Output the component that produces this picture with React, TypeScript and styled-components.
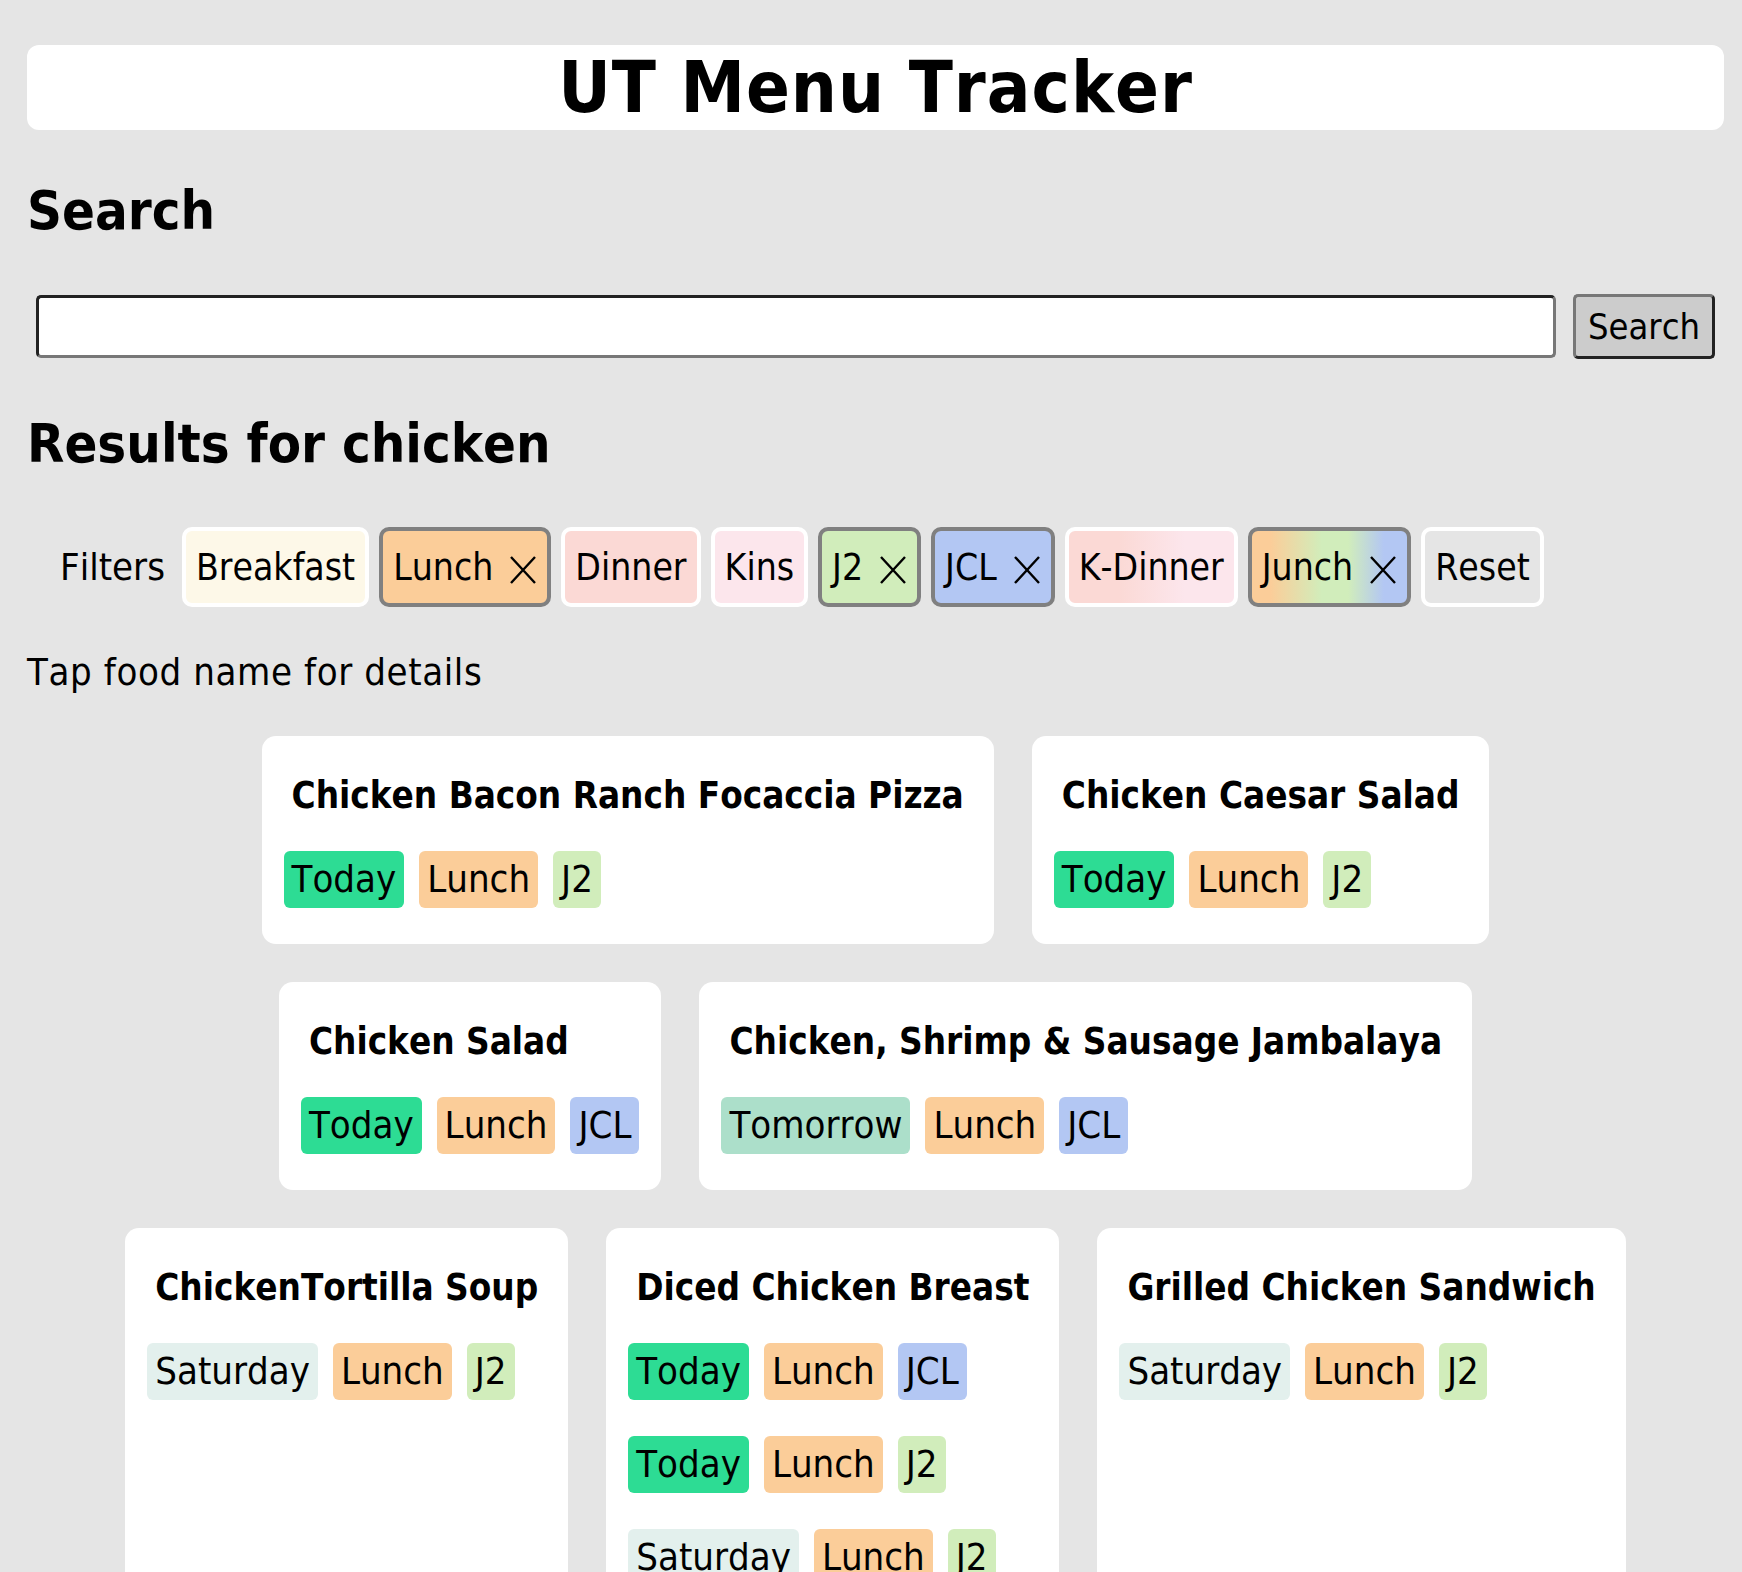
import * as React from 'react';
import styled, { createGlobalStyle } from 'styled-components';

const GlobalStyle = createGlobalStyle`
    html, body {
        margin: 0;
        padding: 0;
        background: #e5e5e5;
    }

    body {
        font-family: "DejaVu Sans Condensed", "DejaVu Sans", sans-serif;
        font-stretch: condensed;
        font-kerning: none;
        color: #000;
    }
`;

const colors: Record<string, string> = {
    Today: '#2ddc94',
    Tomorrow: '#acdfca',
    Saturday: '#e3f0ed',
    Breakfast: '#fdf8e8',
    Lunch: '#fbcd99',
    Dinner: '#fbd9d5',
    Kins: '#fce6ec',
    J2: '#d1edbb',
    JCL: '#b3c7f3',
    'K-Dinner': 'linear-gradient(to right, #fbd9d5 30%, #fce6ec 70%)',
    Junch: 'linear-gradient(to right, #fbcd99 12%, #d1edbb 45%, #d1edbb 62%, #b3c7f3 85%)',
    Reset: '#e5e5e5',
};

const Page = styled.div`
    margin: 45px 18px 0 27px;
`;

const TitleBar = styled.header`
    background: #fff;
    border-radius: 12px;
    text-align: center;
`;

const Title = styled.h1`
    margin: 0;
    font-size: 72px;
    line-height: 85px;
    font-weight: 700;
    letter-spacing: 1px;
`;

const Heading = styled.h2`
    margin: 49px 0 0;
    font-size: 54px;
    font-weight: 700;
    line-height: 63px;
`;

const SearchForm = styled.form`
    display: flex;
    align-items: center;
    gap: 17px;
    margin-top: 52px;
    padding: 0 9px;
`;

const SearchInput = styled.input`
    flex: 1;
    box-sizing: border-box;
    height: 63px;
    border-width: 3px;
    border-style: solid;
    border-color: #222 #777 #777 #222;
    border-radius: 5px;
    background: #fff;
    font: inherit;
    font-size: 36px;
    outline: none;
`;

const SearchButton = styled.button`
    box-sizing: border-box;
    height: 65px;
    padding: 0 12px;
    border-width: 3px;
    border-style: solid;
    border-color: #777 #222 #222 #777;
    border-radius: 5px;
    background: #cccccc;
    font: inherit;
    font-size: 36px;
    color: #000;
`;

const ResultsHeading = styled(Heading)`
    margin-top: 53px;
`;

const FilterRow = styled.div`
    display: flex;
    align-items: center;
    gap: 10px;
    margin-top: 52px;
`;

const FilterLabel = styled.span`
    font-size: 38px;
    padding: 0 7px 0 33px;
`;

const Chip = styled.button<{ $fill: string; $active?: boolean }>`
    display: flex;
    align-items: center;
    box-sizing: border-box;
    height: 80px;
    padding: 0 10px;
    border: 4px solid ${(p) => (p.$active ? '#808080' : '#ffffff')};
    border-radius: 10px;
    background: ${(p) => p.$fill};
    font: inherit;
    font-size: 37px;
    color: #000;
`;

const Close = styled.svg`
    width: 28px;
    height: 30px;
    margin: 6px 0 0 16px;
`;

const Hint = styled.p`
    margin: 44px 0 0;
    font-size: 38px;
    line-height: 43px;
    letter-spacing: 0.6px;
`;

const CardList = styled.div`
    display: flex;
    flex-wrap: wrap;
    justify-content: center;
    gap: 38px;
    max-width: 1580px;
    margin: 42px auto 0;
`;

const Card = styled.div`
    flex: none;
    background: #fff;
    border-radius: 14px;
    padding: 0 22px 36px;
`;

const FoodName = styled.h3`
    margin: 39px 8px 34px;
    font-size: 36.5px;
    line-height: 42px;
    font-weight: 700;
    white-space: nowrap;
`;

const TagRows = styled.div`
    display: flex;
    flex-direction: column;
    gap: 36px;
`;

const TagRow = styled.div`
    display: flex;
    gap: 15px;
`;

const Tag = styled.span<{ $fill: string }>`
    padding: 7px 8px;
    border-radius: 6px;
    background: ${(p) => p.$fill};
    font-size: 38px;
    line-height: 43px;
    white-space: nowrap;
`;

const filters = [
    { name: 'Breakfast' },
    { name: 'Lunch', active: true },
    { name: 'Dinner' },
    { name: 'Kins' },
    { name: 'J2', active: true },
    { name: 'JCL', active: true },
    { name: 'K-Dinner' },
    { name: 'Junch', active: true },
    { name: 'Reset' },
];

const foods: { name: string; rows: string[][] }[] = [
    { name: 'Chicken Bacon Ranch Focaccia Pizza', rows: [['Today', 'Lunch', 'J2']] },
    { name: 'Chicken Caesar Salad', rows: [['Today', 'Lunch', 'J2']] },
    { name: 'Chicken Salad', rows: [['Today', 'Lunch', 'JCL']] },
    { name: 'Chicken, Shrimp & Sausage Jambalaya', rows: [['Tomorrow', 'Lunch', 'JCL']] },
    { name: 'ChickenTortilla Soup', rows: [['Saturday', 'Lunch', 'J2']] },
    {
        name: 'Diced Chicken Breast',
        rows: [
            ['Today', 'Lunch', 'JCL'],
            ['Today', 'Lunch', 'J2'],
            ['Saturday', 'Lunch', 'J2'],
        ],
    },
    { name: 'Grilled Chicken Sandwich', rows: [['Saturday', 'Lunch', 'J2']] },
];

const CloseIcon = () => (
    <Close viewBox="0 0 28 30" fill="none" stroke="#000" strokeWidth={2.4}>
        <path d="M2 2 L26 28 M26 2 L2 28" />
    </Close>
);

const App = () => {
    return (
        <>
            <GlobalStyle />
            <Page>
                <TitleBar>
                    <Title>UT Menu Tracker</Title>
                </TitleBar>

                <Heading>Search</Heading>
                <SearchForm onSubmit={(e) => e.preventDefault()}>
                    <SearchInput type="text" />
                    <SearchButton type="submit">Search</SearchButton>
                </SearchForm>

                <ResultsHeading>Results for chicken</ResultsHeading>
                <FilterRow>
                    <FilterLabel>Filters</FilterLabel>
                    {filters.map((f) => (
                        <Chip key={f.name} $fill={colors[f.name]} $active={f.active}>
                            {f.name}
                            {f.active && <CloseIcon />}
                        </Chip>
                    ))}
                </FilterRow>

                <Hint>Tap food name for details</Hint>

                <CardList>
                    {foods.map((food) => (
                        <Card key={food.name}>
                            <FoodName>{food.name}</FoodName>
                            <TagRows>
                                {food.rows.map((row, i) => (
                                    <TagRow key={i}>
                                        {row.map((t) => (
                                            <Tag key={t} $fill={colors[t]}>{t}</Tag>
                                        ))}
                                    </TagRow>
                                ))}
                            </TagRows>
                        </Card>
                    ))}
                </CardList>
            </Page>
        </>
    );
};

export default App;
